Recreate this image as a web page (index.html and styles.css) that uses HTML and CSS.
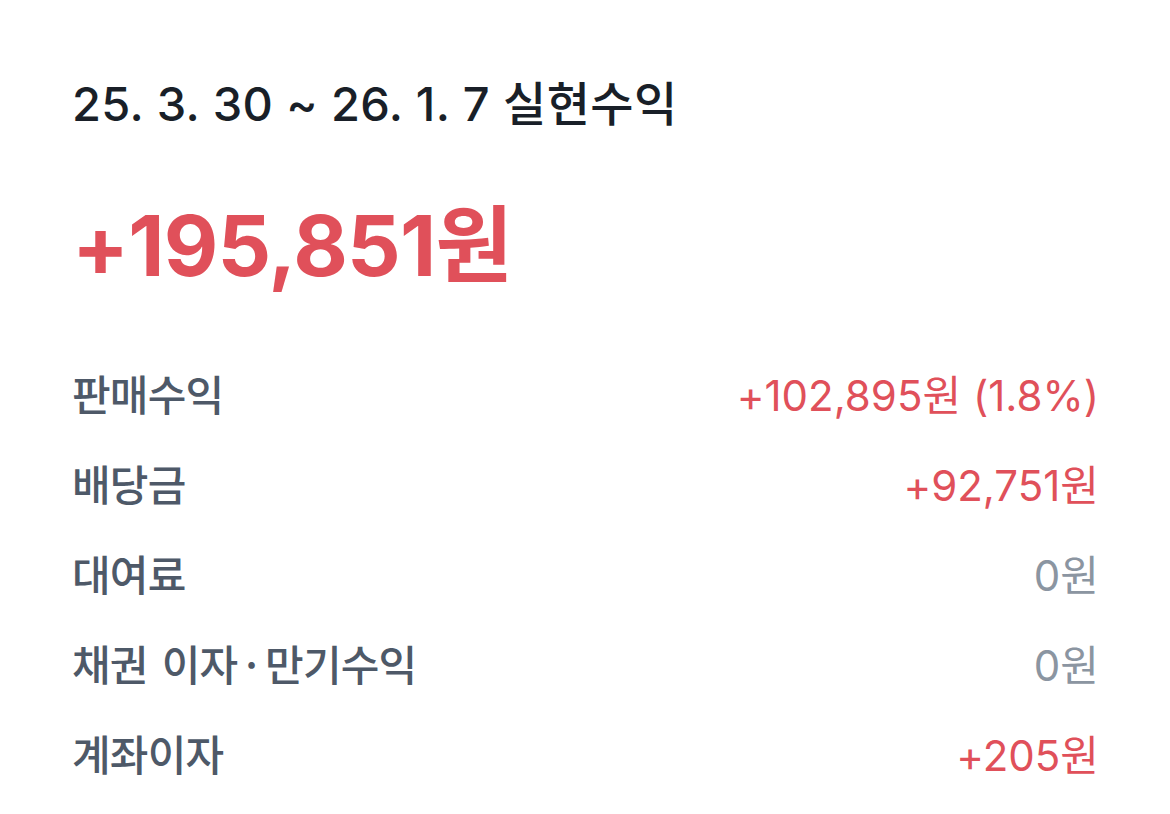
FILE: index.html
```html
<!DOCTYPE html>
<html lang="ko">
<head>
<meta charset="utf-8">
<link rel="stylesheet" href="styles.css">
</head>
<body>
<main class="panel">
  <h1 class="period">25. 3. 30 ~ 26. 1. 7 실현수익</h1>
  <div class="total">+195,851원</div>
  <ul class="rows">
    <li class="row"><span class="label">판매수익</span><span class="value plus">+102,895원 (1.8%)</span></li>
    <li class="row"><span class="label">배당금</span><span class="value plus">+92,751원</span></li>
    <li class="row"><span class="label">대여료</span><span class="value zero">0원</span></li>
    <li class="row"><span class="label">채권 이자<span class="dot">·</span>만기수익</span><span class="value zero">0원</span></li>
    <li class="row"><span class="label">계좌이자</span><span class="value plus">+205원</span></li>
  </ul>
</main>
</body>
</html>
```

FILE: styles.css
```css
* { box-sizing: border-box; }
html, body {
  margin: 0;
  padding: 0;
  background: #ffffff;
}
body {
  font-family: Inter, "Noto Sans CJK KR", sans-serif;
  width: 1170px;
  height: 814px;
  overflow: hidden;
}
.panel {
  padding: 74px 71px 0 72px;
}
.period {
  margin: 0;
  font-size: 47px;
  font-weight: 500;
  color: #191f28;
  line-height: 60px;
  letter-spacing: 0.4px;
}
.total {
  margin-top: 62px;
  font-size: 84px;
  font-weight: 700;
  color: #e0505a;
  line-height: 100px;
  letter-spacing: -0.8px;
}
.rows {
  list-style: none;
  margin: 51px 0 0;
  padding: 0;
  display: flex;
  flex-direction: column;
}
.row {
  display: flex;
  justify-content: space-between;
  align-items: center;
  height: 90px;
}
.label {
  font-family: "Noto Sans CJK KR", sans-serif;
  font-size: 42px;
  font-weight: 500;
  color: #4e5968;
  letter-spacing: -0.8px;
  word-spacing: 3px;
}
.dot {
  margin: 0 8px;
}
.value {
  font-size: 42px;
  font-weight: 400;
  letter-spacing: 0;
}
.plus { color: #e0505a; }
.zero { color: #8b95a1; }
```
